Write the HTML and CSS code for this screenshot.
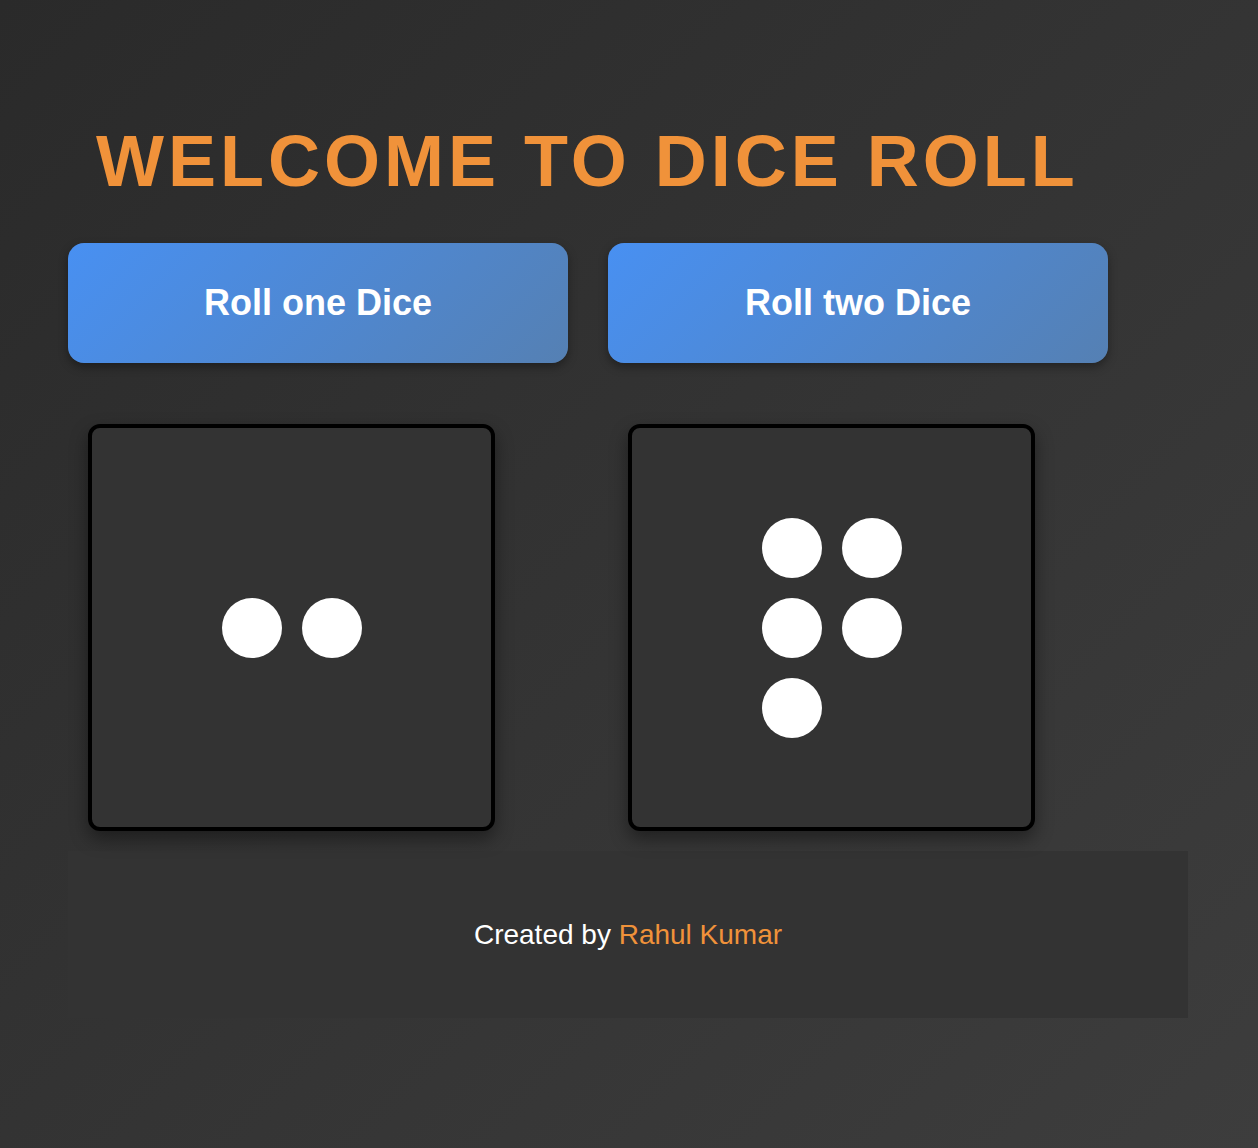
FILE: index.html
```html
<!DOCTYPE html>
<html lang="en">
<head>
<meta charset="utf-8">
<title>Dice Roll</title>
<link rel="stylesheet" href="styles.css">
</head>
<body>
<main class="app">
  <h1 class="title">Welcome to Dice Roll</h1>
  <div class="columns">
    <section class="column">
      <button class="roll-btn">Roll one Dice</button>
      <div class="dice">
        <div class="dots">
          <span class="dot"></span><span class="dot"></span>
        </div>
      </div>
    </section>
    <section class="column">
      <button class="roll-btn">Roll two Dice</button>
      <div class="dice">
        <div class="dots">
          <span class="dot"></span><span class="dot"></span>
          <span class="dot"></span><span class="dot"></span>
          <span class="dot"></span>
        </div>
      </div>
    </section>
  </div>
  <footer class="footer">
    <p class="credit">Created by <span class="author">Rahul Kumar</span></p>
  </footer>
</main>
</body>
</html>
```

FILE: styles.css
```css
html, body {
  margin: 0;
  padding: 0;
}

body {
  min-height: 100vh;
  background: linear-gradient(135deg, #2a2a2a 0%, #3d3d3d 100%);
  font-family: "Liberation Sans", Arial, sans-serif;
  color: #ffffff;
}

.app {
  width: 1120px;
  margin-left: 68px;
  padding-top: 120px;
}

.title {
  margin: 0 0 41px 28px;
  font-size: 72px;
  font-weight: 700;
  line-height: normal;
  letter-spacing: 4px;
  text-transform: uppercase;
  color: #f0923a;
}

.columns {
  display: flex;
  gap: 40px;
}

.column {
  display: flex;
  flex-direction: column;
  align-items: flex-start;
  width: 500px;
}

.roll-btn {
  width: 500px;
  height: 120px;
  margin-bottom: 41px;
  border: none;
  border-radius: 16px;
  background: linear-gradient(135deg, #4890f2 0%, #5580b3 100%);
  box-shadow: 0 4px 10px rgba(0, 0, 0, 0.35);
  color: #ffffff;
  font-family: "Liberation Sans", Arial, sans-serif;
  font-size: 36px;
  font-weight: 700;
  cursor: pointer;
}

.dice {
  box-sizing: border-box;
  width: 407px;
  height: 407px;
  margin: 20px;
  border: 4px solid #000000;
  border-radius: 12px;
  background: #333333;
  box-shadow: 0 8px 18px rgba(0, 0, 0, 0.4);
  display: flex;
  align-items: center;
  justify-content: center;
}

.dots {
  display: grid;
  grid-template-columns: repeat(2, 60px);
  gap: 20px;
}

.dot {
  display: block;
  width: 60px;
  height: 60px;
  border-radius: 50%;
  background: #ffffff;
}

.footer {
  height: 167px;
  background: #333333;
  display: flex;
  align-items: center;
  justify-content: center;
}

.credit {
  margin: 0;
  font-size: 28px;
}

.author {
  color: #f0923a;
}
```
